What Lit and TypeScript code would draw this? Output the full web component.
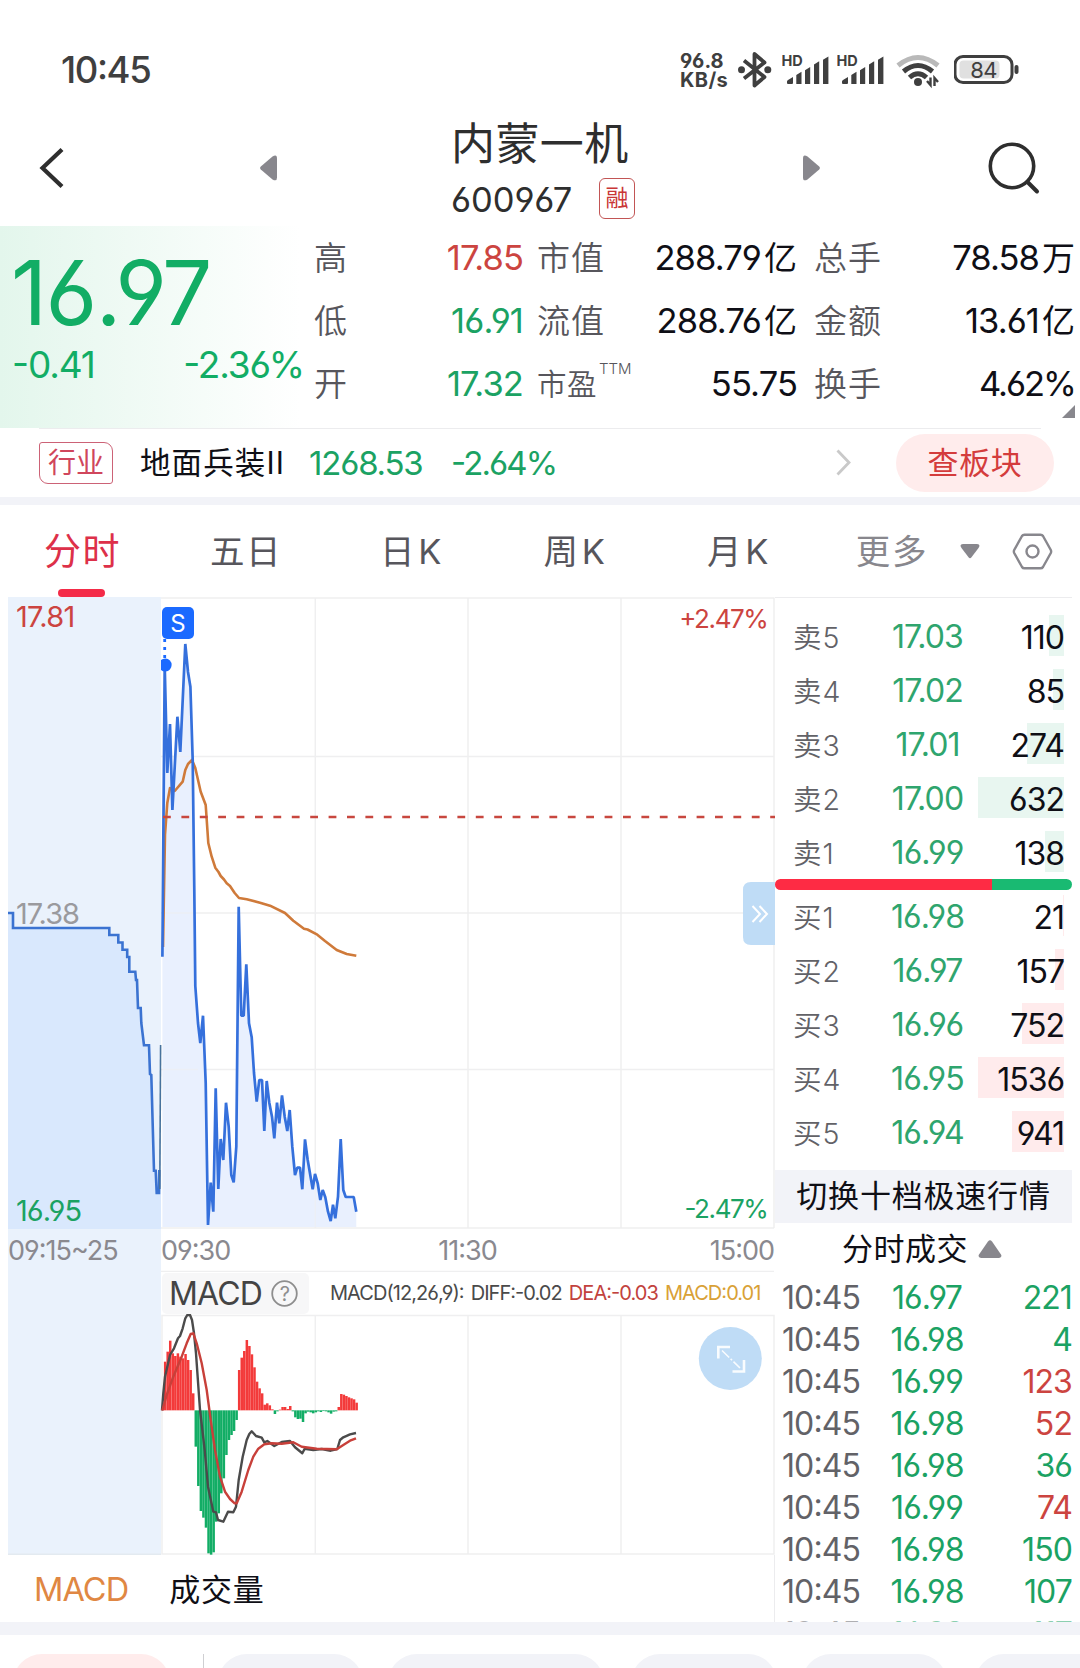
import { LitElement, html, svg, css, nothing } from "lit";
import { customElement } from "lit/decorators.js";
import { classMap } from "lit/directives/class-map.js";

type Pt = [number, number];
const toPoints = (pts: Pt[]) => pts.map((p) => p.join(",")).join(" ");

/* ---------- market data, already mapped to chart pixels ---------- */

const AUCTION: Pt[] = [
  [0, 316], [5, 316], [5, 331], [101.3, 331], [101.3, 338], [110.3, 338], [110.3, 345.5],
  [114.5, 345.5], [114.5, 352.7], [119.2, 352.7], [119.2, 360], [121.3, 360], [121.3, 374.7],
  [127.3, 374.7], [128, 383], [129, 383], [130, 411], [132.7, 411], [133.3, 426], [135, 440],
  [136, 448.3], [141, 448.3], [142, 477], [143.3, 478], [146, 573.7], [147.7, 573.7],
  [148.7, 596], [151, 596], [151.3, 573],
];

const PRICE: Pt[] = [
  [154.4, 359.7], [156.7, 68], [159.3, 176], [162, 127], [164.4, 213], [169.4, 119.7],
  [172.3, 155], [177.3, 47], [180, 75], [182.4, 89.7], [184.7, 163], [186.3, 293], [187.3, 389],
  [190, 426], [192.3, 446], [195, 418.7], [197.7, 486], [200, 628], [202.7, 585.7],
  [205.3, 614.7], [207.7, 491.3], [210.3, 592], [212.7, 542], [215.3, 563], [218, 505.7],
  [220.7, 529.7], [223.3, 578], [225.7, 585.3], [228.3, 549.7], [230.7, 309.7], [233.3, 418.7],
  [235.7, 418.7], [238.3, 367.3], [241, 426.3], [243.7, 440.3], [246, 476], [248.7, 504.7],
  [251.3, 483], [254, 483], [256.3, 534], [258.7, 484], [261.3, 505.7], [264, 519.7],
  [266.3, 541.3], [269, 505.7], [271.3, 526.3], [274, 498.3], [276.7, 519.7], [279.3, 534],
  [281.7, 513], [284.3, 549.7], [287, 578], [289.3, 570.7], [292, 570.7], [294.3, 592.3],
  [297, 542.3], [299.7, 563], [304.7, 592.3], [307, 577], [309.7, 586.3], [312.3, 603],
  [314.7, 593], [317.3, 600.3], [320, 614.7], [322.7, 624], [325, 607.7], [327.3, 621.3],
  [330, 599.7], [332.7, 542], [335.3, 593], [337.7, 600], [345.7, 600], [348.3, 614.7],
];

const AVERAGE: Pt[] = [
  [155, 350], [157, 238], [159.3, 206], [162, 191], [166.7, 194], [174.7, 184.7], [177.3, 173],
  [180, 167], [184, 163], [187.3, 171], [192.7, 194.7], [197.7, 208], [200.3, 246],
  [203.7, 259.7], [207.3, 270.7], [210.5, 275], [212.7, 279], [216, 282.5], [218.7, 286.3],
  [222, 289], [226.7, 296], [231, 301], [238.7, 302.3], [252, 305.7], [262, 308.7], [277, 316],
  [285.3, 323.7], [296, 331.7], [299.5, 332.5], [309.3, 337.7], [317, 344], [328.7, 353],
  [338.7, 357], [348.3, 358.7],
];

const ZERO = 451;
const BARS: number[] = [
  440, 305, 275, 242, 280, 288, 280, 290, 295, 282, 300, 330, 400, 560, 678, 753, 773, 803, 880,
  884, 877, 785, 760, 700, 655, 585, 540, 525, 513, 480, 330, 293, 273, 240, 258, 283, 322, 365,
  385, 400, 434, 430, 436, 448, 462, 454, 449, 441, 441, 447, 438, 454, 472, 477, 476, 486, 460,
  455, 457, 460, 457, 454, 456, 453, 454, 457, 461, 455, 454, 441, 402, 404, 408, 412, 415, 418,
  428,
];
const DIFF: Pt[] = [
  [486, 451], [490, 400], [495, 350], [502, 320], [510, 285], [522, 265], [534, 235], [540, 228],
  [548, 205], [556, 175], [562, 165], [570, 165], [576, 180], [582, 220], [588, 280], [600, 450],
  [614, 570], [624, 680], [640, 755], [648, 757], [654, 780], [670, 785], [684, 755], [700, 757],
  [708, 740], [716, 660], [728, 590], [740, 540], [748, 522], [755, 514], [768, 528], [785, 533],
  [793, 547], [802, 543], [823, 558], [845, 546], [870, 543], [885, 562], [907, 580], [914, 566],
  [940, 570], [965, 567], [992, 572], [1012, 567], [1020, 540], [1030, 532], [1050, 523],
  [1068, 519],
];
const DEA: Pt[] = [
  [487, 451], [500, 405], [520, 350], [545, 290], [560, 250], [572, 222], [580, 220], [590, 250],
  [605, 310], [620, 390], [632, 480], [645, 570], [660, 650], [675, 695], [690, 717], [704, 730],
  [710, 730], [725, 695], [745, 630], [760, 590], [775, 566], [793, 553], [815, 550], [845, 551],
  [880, 547], [905, 560], [950, 566], [1010, 568], [1030, 555], [1050, 542], [1068, 535],
];
const mx = (x: number) => x / 3 - 8;
const my = (y: number) => y / 3 - 54;
const macdPts = (pts: Pt[]): Pt[] => pts.map(([x, y]) => [+mx(x).toFixed(1), +my(y).toFixed(1)]);

const SELLS = [
  ["卖5", "17.03", "110", 15],
  ["卖4", "17.02", "85", 11],
  ["卖3", "17.01", "274", 37],
  ["卖2", "17.00", "632", 86],
  ["卖1", "16.99", "138", 19],
] as const;
const BUYS = [
  ["买1", "16.98", "21", 1],
  ["买2", "16.97", "157", 9],
  ["买3", "16.96", "752", 42],
  ["买4", "16.95", "1536", 86],
  ["买5", "16.94", "941", 52],
] as const;
const TRADES = [
  ["10:45", "16.97", "221", false],
  ["10:45", "16.98", "4", false],
  ["10:45", "16.99", "123", true],
  ["10:45", "16.98", "52", true],
  ["10:45", "16.98", "36", false],
  ["10:45", "16.99", "74", true],
  ["10:45", "16.98", "150", false],
  ["10:45", "16.98", "107", false],
  ["10:45", "16.98", "117", false],
] as const;

const baseText = css`
  :host {
    display: block;
    font-family: Inter, "Noto Sans CJK SC", sans-serif;
    font-feature-settings: "cv03", "cv04", "case", "calt" 0;
  }
  * {
    box-sizing: border-box;
  }
  svg {
    display: block;
    flex: none;
  }
`;

@customElement("phone-status")
export class PhoneStatus extends LitElement {
  static styles = [
    baseText,
    css`
      .bar {
        display: flex;
        align-items: center;
        justify-content: space-between;
        height: 100px;
        padding: 40px 59px 0 61px;
        color: #3f3f3f;
      }
      .clock {
        font-size: 36.5px;
        font-weight: 500;
        letter-spacing: -1.4px;
      }
      .icons {
        display: flex;
        align-items: center;
      }
      .speed {
        width: 58px;
        padding-top: 1px;
        font-size: 20px;
        font-weight: 700;
        line-height: 18.5px;
        letter-spacing: 0;
        white-space: nowrap;
      }
      .speed div + div {
        letter-spacing: 0.4px;
      }
      .hd {
        font: 700 14.5px Inter, sans-serif;
        letter-spacing: -0.2px;
      }
      .level {
        font: 400 22px Inter, sans-serif;
        letter-spacing: -0.6px;
      }
    `,
  ];

  signal() {
    return html`<svg width="55" height="40" viewBox="0 0 55 40" fill="#3f3f3f">
      <text class="hd" x="-0.5" y="16">HD</text>
      <path
        d="M5 31.500q0-1 1-1.600L11 27v6q0 1-1 1H6q-1 0-1-1zM14.300 25l5.200-3.200V34h-5.200zM23 20.200l5.200-3.200V34H23zM32 14.500l5.200-3.200V34H32zM41 9.800l5.400-3.300V34H41z"
      />
    </svg>`;
  }

  render() {
    return html`<div class="bar">
      <div class="clock">10:45</div>
      <div class="icons">
        <div class="speed"><div>96.8</div><div>KB/s</div></div>
        <svg width="44" height="40" viewBox="0 0 44 40" fill="none" stroke="#3f3f3f" stroke-width="3.8">
          <path d="M6 10.500L26.500 27 16.500 35.500V4L26.500 12.500 6 28.500" stroke-linejoin="round" />
          <circle cx="3.500" cy="19.700" r="3.500" fill="#3f3f3f" stroke="none" />
          <circle cx="29.800" cy="19.700" r="3.500" fill="#3f3f3f" stroke="none" />
        </svg>
        ${this.signal()}${this.signal()}
        <svg width="62" height="40" viewBox="0 0 62 40" fill="none" stroke-width="5">
          <path d="M6 15.500Q26-0.500 46 15.500" stroke="#b9b9b9" />
          <path d="M11.500 21.500Q26 9.500 40.500 21.500" stroke="#3f3f3f" />
          <path d="M17.500 27.500Q26 20 34.500 27.500" stroke="#3f3f3f" />
          <circle cx="26" cy="32" r="4" fill="#3f3f3f" />
          <path d="M38.500 27.500v7.500l-3.500-4M42.500 36v-8l3.500 4" stroke="#3f3f3f" stroke-width="2.400" />
        </svg>
        <svg width="67" height="40" viewBox="1 0 67 40">
          <rect x="2" y="6.500" width="57" height="26" rx="8" fill="#fff" stroke="#3f3f3f" stroke-width="3" />
          <rect x="6.500" y="10.500" width="40" height="18" rx="4" fill="#e0e0e0" />
          <rect x="61.500" y="15" width="4" height="9" rx="2" fill="#3f3f3f" />
          <text class="level" x="30.500" y="27.500" text-anchor="middle" fill="#3f3f3f">84</text>
        </svg>
      </div>
    </div>`;
  }
}

@customElement("stock-header")
export class StockHeader extends LitElement {
  static styles = [
    baseText,
    css`
      .header {
        display: grid;
        grid-template-columns: 260px 1fr 260px;
        height: 126px;
        align-items: center;
        color: #2e2e2e;
      }
      .back {
        padding: 10px 0 0 38px;
      }
      .mid {
        display: flex;
        justify-content: space-between;
        align-items: center;
      }
      .arrow {
        margin-top: 10px;
      }
      .title {
        width: 190px;
        padding: 10px 0 0 6px;
      }
      .name {
        font-size: 44px;
        line-height: 56px;
        height: 62px;
        letter-spacing: 0.4px;
        white-space: nowrap;
      }
      .codeline {
        display: flex;
        align-items: center;
        height: 42px;
        font-size: 34.5px;
        letter-spacing: 0;
      }
      .code {
        flex: none;
        width: 148px;
      }
      .badge {
        flex: none;
        width: 36px;
        height: 41px;
        margin-top: -2px;
        border: 1.5px solid #c25555;
        border-radius: 6px;
        color: #c93636;
        font-size: 23px;
        line-height: 39px;
        text-align: center;
        letter-spacing: 0;
      }
      .search {
        display: flex;
        justify-content: flex-end;
        padding: 10px 38px 0 0;
      }
    `,
  ];

  render() {
    return html`<div class="header">
      <div class="back">
        <svg width="28" height="44" viewBox="0 0 28 44" fill="none" stroke="#2e2e2e" stroke-width="4.200">
          <path d="M24 3.500L4.500 22 24 40.500" />
        </svg>
      </div>
      <div class="mid">
        <svg class="arrow" width="17" height="26" viewBox="0 0 17 26">
          <path d="M0.800 11.500L12.500 1.600Q17 -1.200 17 3.500V22.500Q17 27 12.500 24.400L0.800 14.500Q-0.600 13 0.800 11.500z" fill="#88878d" />
        </svg>
        <div class="title">
          <div class="name">内蒙一机</div>
          <div class="codeline"><span class="code">600967</span><span class="badge">融</span></div>
        </div>
        <svg class="arrow" width="17" height="26" viewBox="0 0 17 26">
          <path d="M16.200 11.500L4.500 1.600Q0 -1.200 0 3.500V22.500Q0 27 4.500 24.400L16.200 14.500Q17.600 13 16.200 11.500z" fill="#88878d" />
        </svg>
      </div>
      <div class="search">
        <svg width="54" height="54" viewBox="0 0 54 54" fill="none" stroke="#2e2e2e" stroke-width="3.600">
          <circle cx="24" cy="25" r="21.700" />
          <path d="M39.500 41L49 50.500" stroke-linecap="round" stroke-width="4" />
        </svg>
      </div>
    </div>`;
  }
}

@customElement("quote-summary")
export class QuoteSummary extends LitElement {
  static styles = [
    baseText,
    css`
      .quote {
        display: grid;
        grid-template-columns: 302px 208px 261px 264px;
        column-gap: 13px;
        height: 202px;
        background: linear-gradient(90deg, #e3f6ec 0, #ffffff 300px);
      }
      .main {
        color: #12ad65;
        padding: 17px 0 0 11px;
      }
      .price {
        font-size: 89px;
        line-height: 99px;
        letter-spacing: -1.600px;
      }
      .change {
        display: flex;
        justify-content: space-between;
        font-size: 37px;
        line-height: 46px;
        letter-spacing: -1.100px;
        margin-right: -2px;
        padding-left: 1px;
      }
      .col {
        display: grid;
        grid-auto-rows: 63.300px;
        align-items: center;
      }
      .col.first {
        margin-left: -1px;
      }
      .col.second {
        margin-left: 1px;
      }
      .col.third {
        margin-left: 4px;
        margin-right: -1px;
        position: relative;
      }
      .cell {
        display: flex;
        justify-content: space-between;
        font-size: 34.500px;
        letter-spacing: -0.900px;
        color: #0f0f16;
        line-height: 60px;
      }
      .label {
        font-size: 33px;
        letter-spacing: 1px;
        color: #57565c;
        white-space: nowrap;
        font-weight: 350;
      }
      .label.small {
        font-size: 29.500px;
        letter-spacing: 0.500px;
      }
      sup {
        font-size: 15px;
        line-height: 0;
        vertical-align: 21px;
        letter-spacing: 0;
        margin-left: 2px;
      }
      .unit {
        font-size: 33px;
        letter-spacing: 0;
        margin-left: 3px;
      }
      .up { color: #cc4440; }
      .down { color: #1ba263; }
      .tight { letter-spacing: -2px; }
      .corner {
        position: absolute;
        right: 0;
        top: 179px;
      }
      .industry {
        display: flex;
        align-items: center;
        height: 69px;
        padding: 0 26px 0 39px;
        font-size: 33px;
        color: #0f0f16;
        background: linear-gradient(#ececee, #ececee) 39px 0 / 1002px 1px no-repeat;
      }
      .tag {
        width: 74px;
        height: 42px;
        border: 1.500px solid #cc6276;
        border-radius: 3px 9px 3px 9px;
        color: #d0465c;
        font-size: 28px;
        line-height: 41px;
        text-align: center;
        letter-spacing: 0;
      }
      .sector {
        margin: 0 0 3px 27px;
        width: 169px;
        font-size: 30.500px;
        letter-spacing: 1.100px;
        white-space: nowrap;
      }
      .index {
        width: 142px;
        letter-spacing: -1.200px;
      }
      .ratio { letter-spacing: -1.900px; }
      .chev { margin: 0 45px 0 auto; }
      .pill {
        width: 158px;
        height: 58px;
        border-radius: 29px;
        background: #ffecec;
        color: #d43c3c;
        font-size: 31px;
        line-height: 57px;
        text-align: center;
        letter-spacing: 0.600px;
      }
    `,
  ];

  cell(label: unknown, value: string, unit = "", tone = "", small = false) {
    return html`<div class="cell">
      <span class=${classMap({ label: true, small })}>${label}</span>
      <span class=${tone}>${value}${unit ? html`<span class="unit">${unit}</span>` : nothing}</span>
    </div>`;
  }

  render() {
    return html`<div class="quote">
        <div class="main">
          <div class="price">16.97</div>
          <div class="change"><span>-0.41</span><span>-2.36%</span></div>
        </div>
        <div class="col first">
          ${this.cell("高", "17.85", "", "up")} ${this.cell("低", "16.91", "", "down")}
          ${this.cell("开", "17.32", "", "down")}
        </div>
        <div class="col second">
          ${this.cell("市值", "288.79", "亿")} ${this.cell("流值", "288.76", "亿")}
          ${this.cell(html`市盈<sup>TTM</sup>`, "55.75", "", "", true)}
        </div>
        <div class="col third">
          ${this.cell("总手", "78.58", "万")} ${this.cell("金额", "13.61", "亿")}
          ${this.cell("换手", "4.62%", "", "tight")}
          <svg class="corner" width="13" height="13" viewBox="0 0 13 13"><path d="M13 0V13H0z" fill="#88878d" /></svg>
        </div>
      </div>
      <div class="industry">
        <span class="tag">行业</span>
        <span class="sector">地面兵装II</span>
        <span class="index down">1268.53</span>
        <span class="ratio down">-2.64%</span>
        <svg class="chev" width="15" height="27" viewBox="0 0 15 27" fill="none" stroke="#c9c9c9" stroke-width="2.800">
          <path d="M1.500 1.500L13 13.500 1.500 25.500" />
        </svg>
        <span class="pill">查板块</span>
      </div>`;
  }
}

@customElement("period-tabs")
export class PeriodTabs extends LitElement {
  static styles = [
    baseText,
    css`
      .tabs {
        display: grid;
        grid-template-columns: 165px 162px 169px 158px 169px 124px 53px 1fr;
        height: 92px;
        line-height: 93px;
        font-size: 34.500px;
        letter-spacing: 1.600px;
        color: #57565c;
        white-space: nowrap;
      }
      .tab {
        text-align: center;
      }
      .k {
        margin-left: 2px;
      }
      .active {
        position: relative;
        color: #dd3049;
        font-size: 37px;
      }
      .active::after {
        content: "";
        position: absolute;
        left: 58px;
        bottom: 1px;
        width: 47px;
        height: 8px;
        border-radius: 4px;
        background: #f42b48;
      }
      .more {
        color: #88878d;
        text-align: right;
        padding-right: 19px;
      }
      .icon {
        display: flex;
        align-items: center;
      }
      .drop { padding-left: 13px; }
      .gear { padding-left: 12px; }
    `,
  ];

  render() {
    return html`<div class="tabs">
      <span class="tab active">分时</span>
      <span class="tab">五日</span>
      <span class="tab">日<span class="k">K</span></span>
      <span class="tab">周<span class="k">K</span></span>
      <span class="tab">月<span class="k">K</span></span>
      <span class="more">更多</span>
      <span class="icon drop">
        <svg width="20" height="15" viewBox="0 0 20 15"><path d="M3 0H17Q21 0.500 18.500 4L11.500 13.300Q10 15 8.500 13.300L1.500 4Q-1 0.500 3 0z" fill="#88878d" /></svg>
      </span>
      <span class="icon gear">
        <svg width="41" height="37" viewBox="0 0 41 37" fill="none" stroke="#88878d" stroke-width="2.400">
          <path d="M12.500 1.700H28.500Q30.200 1.700 31 3L38.800 17Q39.500 18.500 38.800 20L31 34Q30.200 35.300 28.500 35.300H12.500Q10.800 35.300 10 34L2.200 20Q1.500 18.500 2.200 17L10 3Q10.800 1.700 12.500 1.700z" />
          <circle cx="20.500" cy="18.500" r="6" />
        </svg>
      </span>
    </div>`;
  }
}

@customElement("intraday-chart")
export class IntradayChart extends LitElement {
  static styles = [
    baseText,
    css`
      :host {
        width: 767px;
      }
      .t { font-family: Inter, sans-serif; }
      .lab { font-size: 29px; letter-spacing: -1px; }
      .wide { letter-spacing: -0.700px; }
      .pct { font-size: 26px; letter-spacing: -1.400px; }
      .axis { font-size: 27px; letter-spacing: -1px; fill: #8a898f; }
      .grid { stroke: #efeff0; stroke-width: 1.500; fill: none; }
      .legend {
        display: flex;
        align-items: center;
        height: 42px;
        margin-left: 154px;
        font-size: 20px;
        letter-spacing: -0.950px;
        white-space: nowrap;
        color: #4a4a4a;
      }
      .side {
        width: 767px;
        background: linear-gradient(#eaf2fc, #eaf2fc) 0 0 / 153px 100% no-repeat;
      }
      .name {
        display: flex;
        align-items: center;
        width: 147px;
        height: 41px;
        padding-left: 7px;
        border-radius: 5px;
        background: #f7f7f8;
        font-size: 32px;
        letter-spacing: -0.800px;
        color: #444;
        margin-right: 21px;
      }
      .name svg { margin-left: 9px; }
      .q { font: 400 20px Inter, sans-serif; }
      .legend span { margin-right: 7.100px; }
      .dea { color: #c2423d; }
      .macd { color: #d9a136; }
      .below {
        display: flex;
        align-items: center;
        height: 67px;
        padding: 1px 0 0 26px;
        font-size: 32.500px;
        letter-spacing: -0.900px;
        color: #e08743;
        border-right: 1px solid #ececee;
      }
      .vol {
        margin: 0 0 3px 41px;
        color: #0f0f16;
        font-size: 31px;
        letter-spacing: 0.700px;
      }
    `,
  ];

  priceChart() {
    const area = `154.400,630 ${toPoints(PRICE)} 348.300,630`;
    const pre = `0,632 ${toPoints(AUCTION)} 153,573 153,632`;
    return html`<svg width="767" height="675" viewBox="0 0 767 675">
      <path class="grid" d="M153 1H766.500M153 159.500H766M153 316H766M153 472.500H766M153 631H766M153 674.500H766M307.300 1V631M460 1V631M613 1V631M766 1V631" />
      <polygon points=${pre} fill="#d9e8fd" />
      <polyline points=${toPoints(AUCTION)} fill="none" stroke="#3b73d1" stroke-width="2.600" />
      <path d="M151.800 592L152.600 448" stroke="#47729c" stroke-width="1.600" />
      <polygon points=${area} fill="#e9f0fe" />
      <path class="grid" d="M154 159.500H184M154 316H186M154 472.500H190M307.300 577V631" opacity="0.600" />
      <polyline points=${toPoints(AVERAGE)} fill="none" stroke="#cf7a3a" stroke-width="2.600" stroke-linejoin="round" />
      <polyline points=${toPoints(PRICE)} fill="none" stroke="#3570dc" stroke-width="2.700" stroke-linejoin="bevel" />
      <path d="M155 220H767" stroke="#c8473f" stroke-width="2.600" stroke-dasharray="7.800 10.600" />
      <path d="M156.700 42V62" stroke="#1b6aff" stroke-width="2.800" stroke-dasharray="3 5" />
      <path d="M153 63A6.500 6.500 0 1 1 153 73z" fill="#1b6aff" />
      <rect x="154" y="10" width="32" height="32" rx="5" fill="#1b6aff" />
      <text class="t" x="170" y="34.500" font-size="24" fill="#fff" text-anchor="middle">S</text>
      <text class="t lab wide" x="8" y="30" fill="#cc4440">17.81</text>
      <text class="t lab" x="8" y="327" fill="#9a9a9e">17.38</text>
      <text class="t lab" x="8" y="624" fill="#1ba263">16.95</text>
      <text class="t pct" x="759.500" y="31" text-anchor="end" fill="#cc4440">+2.47%</text>
      <text class="t pct" x="759.500" y="621" text-anchor="end" fill="#1ba263">-2.47%</text>
      <text class="t axis" x="0" y="663">09:15~25</text>
      <text class="t axis" x="153" y="663">09:30</text>
      <text class="t axis" x="459.500" y="663" text-anchor="middle">11:30</text>
      <text class="t axis" x="766" y="663" text-anchor="end">15:00</text>
      <path d="M743 285H767V348H743Q735 348 735 340V293Q735 285 743 285z" fill="#bfdcf6" />
      <path d="M744.500 309l7.500 8-7.500 8M751.500 309l7.500 8-7.500 8" fill="none" stroke="#fff" stroke-width="2" />
    </svg>`;
  }

  macdChart() {
    return html`<svg width="767" height="241" viewBox="0 0 767 241">
      <path class="grid" d="M154 1.500H766V240H154zM307.300 1V240M460 1V240M613 1V240" />
      <path d="M0 240.200H153" stroke="#e3eaf0" stroke-width="1.500" />
      ${BARS.map((v, i) => {
        const up = v < ZERO;
        const h = Math.max(Math.abs(v - ZERO) / 3, 0.7);
        const top = up ? my(ZERO) - h : my(ZERO);
        return svg`<rect x=${mx(484 + i * 7.66).toFixed(2)} y=${top.toFixed(2)} width="2.500" height=${h.toFixed(2)} fill=${up ? "#f33a3a" : "#12ad65"} />`;
      })}
      <polyline points=${toPoints(macdPts(DIFF))} fill="none" stroke="#4b4b4b" stroke-width="2.400" stroke-linejoin="round" />
      <polyline points=${toPoints(macdPts(DEA))} fill="none" stroke="#c8403a" stroke-width="2.400" stroke-linejoin="round" />
      <circle cx="722.300" cy="44.500" r="31.500" fill="#bfdcf6" />
      <path d="M710.300 44.500V33H722M724.500 57.500H736V46" fill="none" stroke="#fff" stroke-width="2.600" opacity="0.900" />
      <path d="M714 36.500L732 54" stroke="#fff" stroke-width="1.600" stroke-dasharray="10 2 2 2" opacity="0.900" />
    </svg>`;
  }

  render() {
    return html`<div class="side">
        ${this.priceChart()}
        <div class="legend">
          <div class="name">
            MACD
            <svg width="27" height="27" viewBox="0 0 27 27">
              <circle cx="13.500" cy="13.500" r="12.300" fill="none" stroke="#8e8e8e" stroke-width="1.800" />
              <text class="q" x="13.500" y="20.800" text-anchor="middle" fill="#8e8e8e">?</text>
            </svg>
          </div>
          <span>MACD(12,26,9):</span><span>DIFF:-0.02</span><span class="dea">DEA:-0.03</span
          ><span class="macd">MACD:0.01</span>
        </div>
        ${this.macdChart()}
      </div>
      <div class="below"><span>MACD</span><span class="vol">成交量</span></div>`;
  }
}

@customElement("order-book")
export class OrderBook extends LitElement {
  static styles = [
    baseText,
    css`
      :host {
        width: 297px;
        height: 1025px;
        overflow: hidden;
      }
      .panel {
        border-top: 1px solid #ececee;
        padding-top: 12px;
      }
      .level {
        display: grid;
        grid-template-columns: 94px 1fr 86px;
        align-items: center;
        height: 54px;
        padding: 0 8px 0 18px;
      }
      .level .label {
        font-size: 28.500px;
        letter-spacing: 1px;
        font-weight: 350;
        color: #626267;
        margin-bottom: 4px;
      }
      .num {
        font-size: 32px;
        letter-spacing: -0.900px;
        line-height: 42px;
      }
      .price {
        color: #2fa56e;
        text-align: center;
        padding-right: 10px;
      }
      .qty {
        display: grid;
        justify-items: end;
        align-items: center;
        color: #0f0f16;
        height: 41px;
      }
      .qty > * {
        grid-area: 1 / 1;
      }
      .qty .num {
        letter-spacing: -1px;
      }
      .fill {
        height: 41px;
        margin-top: -4px;
      }
      .sell { background: #e8f6f0; }
      .buy { background: #ffebec; }
      .ratio {
        display: grid;
        grid-template-columns: 217px 80px;
        height: 11px;
        margin: -1.500px 0 0.500px;
        border-radius: 6px;
        overflow: hidden;
      }
      .red { background: #fe2b44; }
      .green { background: #19ba72; }
      .switch {
        height: 53px;
        margin: 10px 0 4px;
        background: #f2f3f8;
        text-align: center;
        font-size: 31px;
        line-height: 51px;
        letter-spacing: 0.800px;
        color: #0f0f16;
      }
      .heading {
        display: flex;
        align-items: center;
        height: 50px;
        padding: 0 0 11px 67px;
        font-size: 31px;
        letter-spacing: 0.500px;
        color: #0f0f16;
      }
      .heading svg { margin-left: 10px; margin-top: 4px; }
      .trade {
        display: grid;
        grid-template-columns: 111px 68px 1fr;
        height: 42px;
        font-size: 32px;
        letter-spacing: -0.900px;
        line-height: 42px;
        padding: 0 0 0 7px;
        color: #626267;
      }
      .trade .p {
        display: flex;
        justify-content: center;
        color: #1ba263;
        white-space: nowrap;
      }
      .trade .v {
        color: #1ba263;
        text-align: right;
      }
      .trade .v.up { color: #cc4440; }
      .trade:last-child { opacity: 0.5; }
    `,
  ];

  level(row: readonly [string, string, string, number], side: string) {
    return html`<div class="level">
      <span class="label">${row[0]}</span>
      <span class="num price">${row[1]}</span>
      <span class="qty"><span class="fill ${side}" style="width:${row[3]}px"></span><span class="num">${row[2]}</span></span>
    </div>`;
  }

  render() {
    return html`<div class="panel">
      ${SELLS.map((r) => this.level(r, "sell"))}
      <div class="ratio"><span class="red"></span><span class="green"></span></div>
      ${BUYS.map((r) => this.level(r, "buy"))}
      <div class="switch">切换十档极速行情</div>
      <div class="heading">
        分时成交
        <svg width="24" height="18" viewBox="0 0 24 18"><path d="M1 14.500L10 1.600Q12-1 14 1.600L23 14.500Q24.500 17.500 21 18H3Q-0.500 17.500 1 14.500z" fill="#88878d" /></svg>
      </div>
      ${TRADES.map(
        ([t, p, v, up]) => html`<div class="trade">
          <span>${t}</span><span class="p">${p}</span><span class=${classMap({ v: true, up })}>${v}</span>
        </div>`,
      )}
    </div>`;
  }
}

@customElement("app-root")
export class AppRoot extends LitElement {
  static styles = [
    baseText,
    css`
      :host {
        width: 1080px;
        height: 1668px;
        overflow: hidden;
        background: #fff;
      }
      .strip {
        height: 8px;
        background: #f2f3f8;
      }
      .strip.tall {
        height: 13px;
      }
      .main {
        display: flex;
        height: 1025px;
        padding-left: 8px;
      }
      .chips {
        display: flex;
        height: 33px;
        padding: 19px 0 0 13px;
        overflow: hidden;
      }
      .chip {
        flex: none;
        height: 58px;
        border-radius: 29px;
        background: #f2f3f8;
        margin-right: 25px;
      }
      .hot {
        width: 157px;
        background: #ffecec;
        margin-right: 33px;
      }
      .bar {
        flex: none;
        width: 1px;
        height: 40px;
        background: #cfcfd2;
        margin-right: 14px;
      }
      .w1 { width: 145px; }
      .w2 { width: 216px; margin-right: 27px; }
      .w3 { width: 146px; }
      .w4 { width: 145px; margin-right: 28px; }
    `,
  ];

  render() {
    return html`<phone-status></phone-status>
      <stock-header></stock-header>
      <quote-summary></quote-summary>
      <div class="strip"></div>
      <period-tabs></period-tabs>
      <div class="main">
        <intraday-chart></intraday-chart>
        <order-book></order-book>
      </div>
      <div class="strip tall"></div>
      <div class="chips">
        <div class="chip hot"></div>
        <div class="bar"></div>
        <div class="chip w1"></div>
        <div class="chip w2"></div>
        <div class="chip w3"></div>
        <div class="chip w4"></div>
        <div class="chip w3"></div>
      </div>`;
  }
}
